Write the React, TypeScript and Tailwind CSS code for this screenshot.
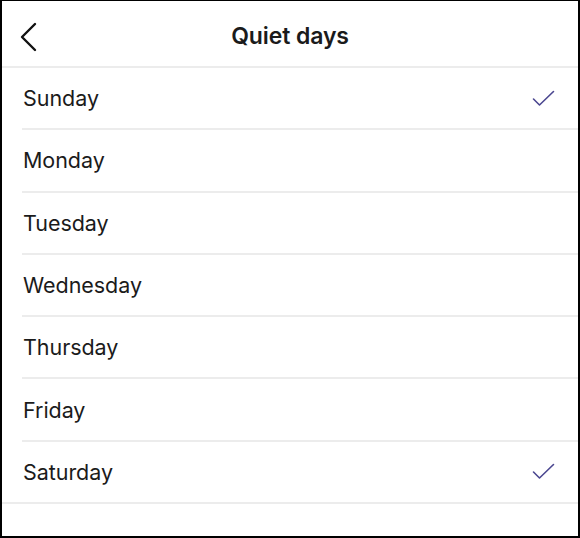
import React from 'react';

const days = [
    { name: 'Sunday', checked: true },
    { name: 'Monday', checked: false },
    { name: 'Tuesday', checked: false },
    { name: 'Wednesday', checked: false },
    { name: 'Thursday', checked: false },
    { name: 'Friday', checked: false },
    { name: 'Saturday', checked: true },
];

const Check: React.FC = () => (
    <svg width="23" height="17" viewBox="0 0 23 17" fill="none">
        <polyline
            points="1.5,9 7.5,15 21.5,1.5"
            stroke="#4b4790"
            strokeWidth="1.6"
            strokeLinecap="round"
            strokeLinejoin="round"
        />
    </svg>
);

const App: React.FC = () => {
    return (
        <div
            className="w-[580px] h-[538px] bg-white border-2 border-t border-black text-[#1b1b1b] flex flex-col"
            style={{ fontFamily: 'Inter, "Open Sans", sans-serif' }}
        >
            <div className="relative h-[67px] shrink-0 flex items-center justify-center border-b-2 border-[#ececec]">
                <svg
                    className="absolute left-[17px] top-[21px]"
                    width="20"
                    height="30"
                    viewBox="0 0 20 30"
                    fill="none"
                >
                    <polyline
                        points="16,2 3,15 16,28"
                        stroke="#111"
                        strokeWidth="2.4"
                        strokeLinecap="round"
                        strokeLinejoin="round"
                    />
                </svg>
                <h1 className="text-[23px] font-semibold tracking-[-0.1px] mt-[5px]">Quiet days</h1>
            </div>
            <div className="flex flex-col">
                {days.map((d, i) => (
                    <div
                        key={d.name}
                        className={`h-[62.3px] flex items-center justify-between border-b-2 border-[#ececec] ${
                            i === days.length - 1 ? 'pl-[21px]' : 'ml-[20px] pl-[1px]'
                        } pr-[23px]`}
                    >
                        <span className="text-[21.5px] tracking-[-0.05px]">{d.name}</span>
                        {d.checked && <Check />}
                    </div>
                ))}
            </div>
        </div>
    );
};

export default App;
